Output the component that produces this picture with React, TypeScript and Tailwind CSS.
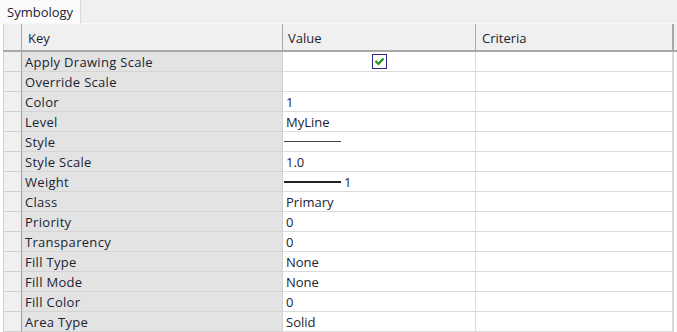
import React from "react";

const rows: { key: string; value: React.ReactNode }[] = [
  { key: "Apply Drawing Scale", value: "check" },
  { key: "Override Scale", value: "" },
  { key: "Color", value: "1" },
  { key: "Level", value: "MyLine" },
  { key: "Style", value: "style" },
  { key: "Style Scale", value: "1.0" },
  { key: "Weight", value: "weight" },
  { key: "Class", value: "Primary" },
  { key: "Priority", value: "0" },
  { key: "Transparency", value: "0" },
  { key: "Fill Type", value: "None" },
  { key: "Fill Mode", value: "None" },
  { key: "Fill Color", value: "0" },
  { key: "Area Type", value: "Solid" },
];

function Value({ v }: { v: React.ReactNode }) {
  if (v === "check") {
    return (
      <div className="flex h-full w-full items-center justify-center pr-[1px]">
        <div className="flex h-[15px] w-[15px] items-center justify-center border-[1.5px] border-[#2a2a8a] bg-white">
          <svg width="11" height="9" viewBox="0 0 11 9">
            <path d="M1.5 4 L4.5 7 L9.5 1.5" stroke="#1c961c" strokeWidth="2.2" fill="none" />
          </svg>
        </div>
      </div>
    );
  }
  if (v === "style") {
    return (
      <div className="flex h-full items-center">
        <div className="h-px w-[57px] bg-[#444]" />
      </div>
    );
  }
  if (v === "weight") {
    return (
      <div className="flex h-full items-center">
        <div className="h-[2px] w-[57px] bg-[#222]" />
        <span className="ml-[3px] leading-[20px]">1</span>
      </div>
    );
  }
  return <span className="pl-[2px] leading-[20px]">{v}</span>;
}

export default function App() {
  return (
    <div
      className="h-[332px] w-[677px] overflow-hidden bg-white text-[13px] text-[#1b2333]"
      style={{ fontFamily: '"Open Sans", "Noto Sans", sans-serif' }}
    >
      {/* tab strip */}
      <div className="flex h-[23px] bg-[#f0f0f0]">
        <div className="flex h-[23px] w-[81px] items-center border-r border-[#d9d9d9] bg-[#fbfbfb] pl-[7px] leading-[20px]">
          Symbology
        </div>
      </div>
      <div className="h-[1px] bg-[#f8f8f8]" />
      {/* grid */}
      <div className="flex flex-col pl-[3px]">
        {/* header */}
        <div className="flex h-[28px] border-b-2 border-[#a9a9a9] bg-[#f0f0f0]">
          <div className="w-[19px] border-r border-[#a9a9a9] border-l border-l-[#d0d0d0]" />
          <div className="flex w-[261px] items-center border-r border-[#a9a9a9] pl-[6px] pt-[3px]">Key</div>
          <div className="flex w-[193px] items-center border-r border-[#a9a9a9] pl-[5px] pt-[3px]">Value</div>
          <div className="flex w-[198px] items-center border-r-2 border-[#a9a9a9] pl-[6px] pt-[3px]">Criteria</div>
        </div>
        {rows.map((r) => (
          <div key={r.key} className="flex h-[20px]">
            <div className="w-[19px] border-b border-l border-r border-b-[#d0d0d0] border-l-[#d0d0d0] border-r-[#a0a0a0] bg-[#f0f0f0]" />
            <div className="w-[261px] border-b border-r border-[#d4d4d4] bg-[#e3e3e3] pl-[3px] leading-[20px] tracking-[0.3px]">
              {r.key}
            </div>
            <div className="w-[193px] border-b border-r border-[#dadada] bg-white pl-[1px]">
              <Value v={r.value} />
            </div>
            <div className="w-[198px] border-b border-r-2 border-[#dadada] bg-white" />
          </div>
        ))}
      </div>
    </div>
  );
}
